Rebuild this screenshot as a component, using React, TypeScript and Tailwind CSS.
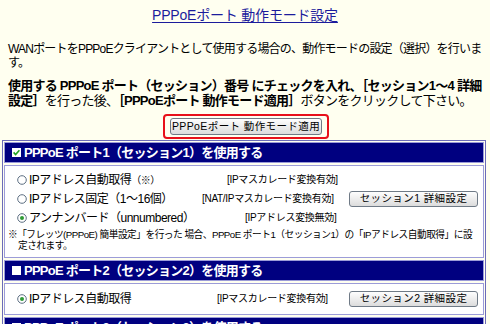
import React from 'react'

const font = "font-['Liberation_Sans','Noto_Sans_CJK_JP',sans-serif]"

function Radio({ checked }: { checked?: boolean }) {
  return (
    <svg width="10" height="10" viewBox="0 0 10 10" className="shrink-0">
      <circle cx="5" cy="5" r="4.3" fill="#ffffff" stroke="#5d6f82" strokeWidth="1" />
      {checked && <circle cx="5" cy="5" r="2" fill="#2f9a36" />}
    </svg>
  )
}

function Check({ checked }: { checked?: boolean }) {
  return (
    <span className="inline-flex h-[9px] w-[9px] shrink-0 items-center justify-center bg-white">
      {checked && (
        <svg width="9" height="9" viewBox="0 0 9 9">
          <path d="M1.6 4.4 L3.6 6.5 L7.4 2.2" fill="none" stroke="#21a121" strokeWidth="1.6" />
        </svg>
      )}
    </span>
  )
}

function XpButton({ label, className = '' }: { label: string; className?: string }) {
  return (
    <button
      type="button"
      className={`h-[16px] whitespace-nowrap rounded-[3px] border border-[#6f7a86] bg-linear-to-b from-[#fefefe] to-[#dcdcdc] text-[10.5px] leading-none text-black tracking-[0.4px] ${className}`}
    >
      {label}
    </button>
  )
}

function Header({ n, checked }: { n: number; checked?: boolean }) {
  return (
    <div className="flex h-[21px] items-center gap-[3px] whitespace-nowrap border border-[#9c9cd8] bg-[#000080] pl-[7px] text-[13px] font-bold text-white">
      <Check checked={checked} />
      <span className="tracking-[-0.75px]">
        PPPoE ポート{n}（セッション{n}）を使用する
      </span>
    </div>
  )
}

interface Row {
  label: React.ReactNode
  mode: string
  pad: string
  checked?: boolean
  button?: string
}

function Body({ rows, note, className = '' }: { rows: Row[]; note?: boolean; className?: string }) {
  return (
    <div className={`border border-[#9c9cd8] bg-white pl-[12px] pr-[5px] ${className}`}>
      {rows.map((r, i) => (
        <div key={i} className="flex h-[19px] items-center whitespace-nowrap">
          <div className="flex w-[185px] items-center gap-[2px] text-[12px] tracking-[-0.5px]">
            <Radio checked={r.checked} />
            <span>{r.label}</span>
          </div>
          <span className={`text-[10px] tracking-[-0.3px] ${r.pad}`}>{r.mode}</span>
          {r.button && <XpButton label={r.button} className="ml-auto w-[129px]" />}
        </div>
      ))}
      {note && (
        <div className="mt-[2px] -ml-[9px] whitespace-nowrap text-[9.7px] leading-[11px] tracking-[-0.5px]">
          <div>
            ※「フレッツ(PPPoE) 簡単設定」を行った 場合、PPPoE ポート1（セッション1）の「IPアドレス自動取得」に設
          </div>
          <div className="pl-[10px]">定されます。</div>
        </div>
      )}
    </div>
  )
}

export default function App() {
  return (
    <div className={`min-h-screen bg-[#fffff0] text-black ${font}`}>
      <h1 className="pt-[6px] text-center text-[14px] leading-[18px]">
        <span className="text-[#1c1c9c] underline underline-offset-2 tracking-[-0.2px]">
          PPPoEポート 動作モード設定
        </span>
      </h1>

      <div className="mt-[18px] whitespace-nowrap pl-[8px] text-[12px] leading-[14px] tracking-[-0.8px]">
        <div>WANポートをPPPoEクライアントとして使用する場合の、動作モードの設定（選択）を行いま</div>
        <div>す。</div>
      </div>

      <div className="mt-[8px] whitespace-nowrap pl-[8px] text-[13px] leading-[15px] tracking-[-0.75px]">
        <div className="font-bold">使用する PPPoE ポート（セッション）番号 にチェックを入れ、［セッション1～4 詳細</div>
        <div>
          <b>設定］</b>を行った後、<b>［PPPoEポート 動作モード適用］</b>ボタンをクリックして下さい。
        </div>
      </div>

      <div className="mt-[6px] flex justify-center pl-[2px]">
        <div className="rounded-[4px] border-2 border-[#e8101a] px-[5px] py-[2px]">
          <XpButton label="PPPoEポート 動作モード適用" className="block w-[152px] h-[17px]" />
        </div>
      </div>

      <div className="mt-[1px] ml-[2px] mr-[4px] flex flex-col gap-[2px] border border-[#6c6cb8] p-[1px]">
        <Header n={1} checked />
        <Body
          className="pt-[4px] pb-[6px]"
          note
          rows={[
            {
              label: (
                <>
                  IPアドレス自動取得<span className="text-[10px]">（※）</span>
                </>
              ),
              mode: '[IPマスカレード変換有効]',
              pad: 'pl-[25px]',
            },
            {
              label: 'IPアドレス固定（1～16個）',
              mode: '[NAT/IPマスカレード変換有効]',
              pad: 'pl-0',
              button: 'セッション1 詳細設定',
            },
            {
              label: 'アンナンバード（unnumbered）',
              mode: '[IPアドレス変換無効]',
              pad: 'pl-[43px]',
              checked: true,
            },
          ]}
        />
        <Header n={2} />
        <Body
          className="pt-[5px] pb-[6px]"
          rows={[
            {
              label: 'IPアドレス自動取得',
              mode: '[IPマスカレード変換有効]',
              pad: 'pl-[15px]',
              checked: true,
              button: 'セッション2 詳細設定',
            },
          ]}
        />
        <Header n={3} />
        <Body
          className="pt-[5px] pb-[6px]"
          rows={[
            {
              label: 'IPアドレス自動取得',
              mode: '[IPマスカレード変換有効]',
              pad: 'pl-[15px]',
              checked: true,
              button: 'セッション3 詳細設定',
            },
          ]}
        />
      </div>
    </div>
  )
}
